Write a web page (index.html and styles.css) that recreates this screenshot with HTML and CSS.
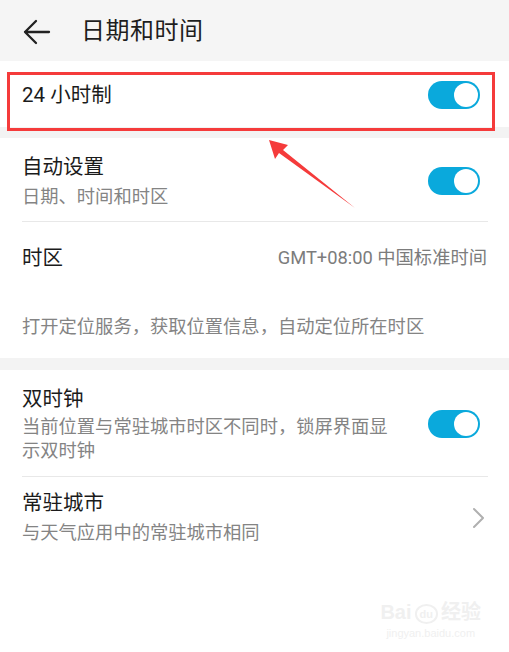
FILE: index.html
```html
<!DOCTYPE html>
<html lang="zh-CN">
<head>
<meta charset="utf-8">
<title>日期和时间</title>
<link rel="stylesheet" href="styles.css">
</head>
<body>
<div class="page">
  <header class="topbar">
    <svg class="back" width="28" height="26" viewBox="0 0 28 26">
      <path d="M26 13 H2 M13 2 L2 13 L13 24" fill="none" stroke="#222" stroke-width="2.3" stroke-linecap="round" stroke-linejoin="round"/>
    </svg>
    <h1 class="title">日期和时间</h1>
  </header>

  <section class="group first">
    <div class="row row-24">
      <div class="label">24 小时制</div>
      <div class="switch"><span class="knob"></span></div>
    </div>
    <div class="highlight"></div>
  </section>

  <div class="band band-1"></div>

  <section class="group">
    <div class="row row-auto">
      <div class="text">
        <div class="label">自动设置</div>
        <div class="sub">日期、时间和时区</div>
      </div>
      <div class="switch"><span class="knob"></span></div>
    </div>
    <div class="divider"></div>
    <div class="row row-zone">
      <div class="label">时区</div>
      <div class="value">GMT+08:00 中国标准时间</div>
    </div>
    <div class="desc">打开定位服务，获取位置信息，自动定位所在时区</div>
  </section>

  <div class="band band-2"></div>

  <section class="group">
    <div class="row row-dual">
      <div class="text narrow">
        <div class="label">双时钟</div>
        <div class="sub">当前位置与常驻城市时区不同时，锁屏界面显示双时钟</div>
      </div>
      <div class="switch"><span class="knob"></span></div>
    </div>
    <div class="divider"></div>
    <div class="row row-city">
      <div class="text">
        <div class="label">常驻城市</div>
        <div class="sub">与天气应用中的常驻城市相同</div>
      </div>
      <svg class="chevron" width="14" height="22" viewBox="0 0 14 22">
        <path d="M2 2 L11 11 L2 20" fill="none" stroke="#b0b0b0" stroke-width="2" stroke-linecap="round" stroke-linejoin="round"/>
      </svg>
    </div>
  </section>

  <svg class="pointer" width="509" height="652" viewBox="0 0 509 652">
    <polygon points="269,140 288,145 283,150 355,208 279,153 275,159" fill="#f53b3b"/>
  </svg>

  <div class="watermark">
    <div class="wm-top">Bai<span class="paw">du</span>经验</div>
    <div class="wm-url">jingyan.baidu.com</div>
  </div>
</div>
</body>
</html>
```

FILE: styles.css
```css
html, body {
  margin: 0;
  padding: 0;
  background: #ffffff;
}

body {
  font-family: Roboto, "Noto Sans CJK SC", "Noto Sans", sans-serif;
  color: #1b1b1b;
}

.page {
  position: relative;
  width: 509px;
  height: 652px;
  overflow: hidden;
  background: #ffffff;
}

.topbar {
  height: 61px;
  background: #f5f5f5;
  display: flex;
  align-items: center;
  padding-left: 23px;
  box-sizing: border-box;
}

.back {
  display: block;
  margin-top: 2px;
}

.title {
  margin: 0 0 0 30px;
  font-size: 24px;
  font-weight: 400;
  line-height: 30px;
  color: #1e1e1e;
  letter-spacing: 0.5px;
}

.group {
  background: #ffffff;
  position: relative;
}

.first {
  height: 66px;
}

.row {
  display: flex;
  align-items: center;
  justify-content: space-between;
  padding: 0 29px 0 22px;
}

.row-24 {
  height: 66px;
  padding-top: 2px;
  box-sizing: border-box;
}

.label {
  font-size: 20.5px;
  line-height: 28px;
  color: #1b1b1b;
}

.sub {
  font-size: 18.3px;
  line-height: 24px;
  color: #848484;
}

.highlight {
  position: absolute;
  left: 7px;
  top: 11px;
  width: 488px;
  height: 59px;
  box-sizing: border-box;
  border: 3px solid #f53b3b;
}

.band {
  background: #f3f3f3;
}

.band-1 {
  height: 11px;
}

.band-2 {
  height: 12px;
}

.switch {
  width: 52px;
  height: 28px;
  border-radius: 14px;
  background: #0aa9dc;
  position: relative;
  flex: none;
}

.knob {
  position: absolute;
  right: 2px;
  top: 2px;
  width: 24px;
  height: 24px;
  border-radius: 50%;
  background: #ffffff;
}

.row-auto {
  padding-top: 15px;
  padding-bottom: 12px;
}

.row-auto .sub {
  margin-top: 4px;
}

.divider {
  height: 1px;
  background: #e8e8e8;
  margin: 0 21px 0 22px;
}

.row-zone {
  height: 72px;
  padding-right: 22px;
}

.value {
  font-size: 18.3px;
  line-height: 24px;
  color: #7c7c7c;
}

.desc {
  padding: 21px 22px 19px 22px;
  font-size: 18.3px;
  line-height: 24px;
  color: #848484;
}

.row-dual {
  padding-top: 15px;
  padding-bottom: 13px;
}

.narrow {
  width: 376px;
}

.row-dual .sub {
  margin-top: 2px;
}

.row-city {
  padding-top: 12px;
  padding-bottom: 12px;
  padding-right: 23px;
}

.row-city .sub {
  margin-top: 4px;
}

.chevron {
  display: block;
  margin-top: 2px;
}

.pointer {
  position: absolute;
  left: 0;
  top: 0;
  pointer-events: none;
}

.watermark {
  position: absolute;
  right: 28px;
  bottom: 12px;
  text-align: center;
  color: #f0f0f0;
  font-family: "Liberation Sans", "Noto Sans CJK SC", sans-serif;
}

.wm-top {
  font-size: 20px;
  line-height: 22px;
  font-weight: 700;
}

.paw {
  display: inline-block;
  font-size: 11px;
  line-height: 14px;
  padding: 1px 3px;
  margin: 0 3px;
  border: 2px solid #f0f0f0;
  border-radius: 50%;
  vertical-align: middle;
}

.wm-url {
  font-size: 11px;
  line-height: 14px;
  margin-top: 2px;
}
```
